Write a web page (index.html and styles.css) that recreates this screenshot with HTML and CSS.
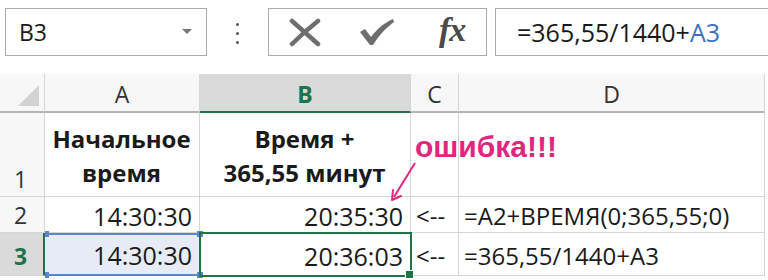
FILE: index.html
```html
<!DOCTYPE html>
<html lang="ru">
<head>
    <meta charset="UTF-8">
    <title>Время + минуты</title>
    <link rel="stylesheet" href="styles.css">
</head>
<body>
    <div class="toolbar">
        <div class="namebox">
            <span>B3</span>
            <span class="dropdown"></span>
        </div>
        <div class="dots"><i></i><i></i><i></i></div>
        <div class="buttons">
            <svg class="icon-x" width="34" height="30" viewBox="0 0 34 30">
                <path d="M4 4 C12 11 22 20 30 27 M30 4 C21 11 12 19 4 27" stroke="#6e6e6e" stroke-width="4.5" fill="none" stroke-linecap="round"/>
            </svg>
            <svg class="icon-check" width="38" height="30" viewBox="0 0 38 30">
                <path d="M3 15 L8 12 L14 20 C20 12 27 6 36 2 L37 5 C29 11 22 18 16 28 L13 28 Z" fill="#6e6e6e"/>
            </svg>
            <span class="fx">fx</span>
        </div>
        <div class="formula">=365,55/1440+<span class="ref">A3</span></div>
    </div>

    <div class="sheet">
        <div class="corner"></div>
        <div class="colhead">A</div>
        <div class="colhead active">B</div>
        <div class="colhead">C</div>
        <div class="colhead">D</div>

        <div class="rowhead">1</div>
        <div class="cell title">Начальное<br>время</div>
        <div class="cell title">Время +<br>365,55 минут</div>
        <div class="cell"></div>
        <div class="cell"></div>

        <div class="rowhead">2</div>
        <div class="cell num">14:30:30</div>
        <div class="cell num">20:35:30</div>
        <div class="cell">&lt;--</div>
        <div class="cell">=A2+ВРЕМЯ(0;365,55;0)</div>

        <div class="rowhead active last">3</div>
        <div class="cell num ref-range last">
            <i class="handle top-left"></i>
            <i class="handle bottom-left"></i>
            14:30:30
        </div>
        <div class="cell num current last">20:36:03</div>
        <div class="cell last">&lt;--</div>
        <div class="cell last">=365,55/1440+A3</div>

        <span class="note">ошибка!!!</span>
        <svg class="arrow" width="30" height="42" viewBox="0 0 30 42">
            <path d="M26 2 L5 36" stroke="#e0267f" stroke-width="2" fill="none"/>
            <path d="M3 39 L4 29 M3 39 L12 35" stroke="#e0267f" stroke-width="2" fill="none" stroke-linecap="round"/>
        </svg>
    </div>
</body>
</html>
```

FILE: styles.css
```css
body {
    margin: 0;
    background-color: #ffffff;
    font-family: "Open Sans", "Liberation Sans", sans-serif;
    color: #1a1a1a;
    width: 768px;
    height: 280px;
    overflow: hidden;
}

/* formula bar */
.toolbar {
    display: flex;
    align-items: center;
    height: 58px;
    padding: 5px 0 0 5px;
    box-sizing: border-box;
}

.namebox, .buttons, .formula {
    height: 48px;
    border: 1px solid #ababab;
    box-sizing: border-box;
    display: flex;
    align-items: center;
}

.namebox {
    width: 202px;
    padding: 0 14px 0 13px;
    justify-content: space-between;
    font-size: 23px;
}

.dropdown {
    width: 0;
    height: 0;
    border-left: 5px solid transparent;
    border-right: 5px solid transparent;
    border-top: 5px solid #777777;
}

.dots {
    width: 61px;
    display: flex;
    flex-direction: column;
    align-items: center;
    gap: 6px;
    padding-top: 4px;
}

.dots i {
    width: 3px;
    height: 3px;
    border-radius: 50%;
    background-color: #555555;
}

.buttons {
    width: 219px;
    padding: 0 0 0 19px;
}

.icon-x {
    margin-right: 35px;
}

.icon-check {
    margin-right: 44px;
}

.fx {
    font-family: "Liberation Serif", serif;
    font-style: italic;
    font-weight: bold;
    font-size: 34px;
    color: #4a4a4a;
    letter-spacing: -1px;
    margin-top: -4px;
}

.formula {
    margin-left: 8px;
    flex: 1;
    padding-left: 21px;
    font-size: 25px;
    border-right: none;
}

.ref {
    color: #3c6fbf;
}

/* sheet */
.sheet {
    position: relative;
    margin-top: 16px;
    display: grid;
    grid-template-columns: 45px 155px 211px 48px 306px;
    grid-template-rows: 39px 84px 36px 43px;
}

.sheet > div {
    box-sizing: border-box;
    border-right: 1px solid #d6d6d6;
    border-bottom: 1px solid #d6d6d6;
    display: flex;
    align-items: flex-end;
}

.corner, .colhead {
    background-color: #f7f7f7;
    border-bottom: 2px solid #b3b3b3 !important;
}

.corner {
    position: relative;
}

.corner::after {
    content: "";
    position: absolute;
    right: 5px;
    bottom: 5px;
    border-left: 21px solid transparent;
    border-bottom: 21px solid #d2d2d2;
}

.colhead {
    justify-content: center;
    font-size: 23px;
    line-height: 26px;
    padding-bottom: 4px;
    color: #333333;
}

.colhead.active {
    background-color: #dadada;
    border-bottom: 2px solid #217346 !important;
    color: #217346;
    font-weight: bold;
}

.rowhead {
    background-color: #f7f7f7;
    font-size: 23px;
    line-height: 28px;
    padding: 0 0 3px 14px;
    color: #333333;
}

.rowhead.active {
    background-color: #dadada;
    border-right: 2px solid #217346;
    color: #217346;
    font-weight: bold;
}

.cell {
    font-size: 24px;
    line-height: 28px;
    padding: 0 6px 2px 5px;
    white-space: nowrap;
}

.cell.title {
    justify-content: center;
    text-align: center;
    font-size: 24px;
    font-weight: bold;
    line-height: 34px;
    padding-bottom: 6px;
}

.cell.num {
    justify-content: flex-end;
    padding-right: 7px;
    font-size: 25px;
}

.sheet > .last {
    padding-bottom: 5px;
}

.ref-range {
    position: relative;
    background-color: #e6ebf5;
    border-top: 2px solid #5b86cf;
    border-bottom: 2px solid #5b86cf !important;
}

.ref-range::before,
.ref-range::after,
.handle {
    content: "";
    position: absolute;
    right: -4px;
    width: 6px;
    height: 6px;
    background-color: #5b86cf;
}

.ref-range::before,
.handle.top-left {
    top: -4px;
}

.ref-range::after,
.handle.bottom-left {
    bottom: -4px;
}

.handle.top-left,
.handle.bottom-left {
    right: auto;
    left: 0;
    width: 4px;
}

.current {
    position: relative;
    outline: 2px solid #217346;
    outline-offset: -1px;
}

.current::after {
    content: "";
    position: absolute;
    right: -4px;
    bottom: -4px;
    width: 7px;
    height: 7px;
    background-color: #217346;
    border: 1px solid #ffffff;
}

.note {
    position: absolute;
    left: 415px;
    top: 56px;
    font-family: "Liberation Sans", sans-serif;
    font-size: 30px;
    font-weight: bold;
    color: #e0267f;
}

.arrow {
    position: absolute;
    left: 389px;
    top: 87px;
}
```
